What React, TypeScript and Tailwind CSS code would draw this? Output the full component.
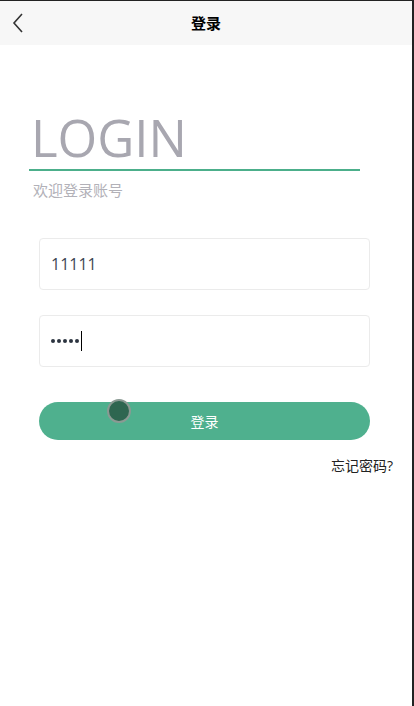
import React from "react";

export default function App() {
  return (
    <div className="relative h-[706px] w-[414px] overflow-hidden border-t border-r-2 border-[#222] bg-white font-['Open_Sans','Noto_Sans_CJK_SC',sans-serif]">
      {/* Header */}
      <div className="relative flex h-[44px] items-center justify-center bg-[#f7f7f7]">
        <button className="absolute left-[11px] top-[11px] text-[#333]">
          <svg width="14" height="22" viewBox="0 0 14 22" fill="none">
            <path d="M11 2 L3 11 L11 20" stroke="#333" strokeWidth="1.6" />
          </svg>
        </button>
        <h1 className="text-[15px] font-bold text-black">登录</h1>
      </div>

      {/* Title */}
      <div className="ml-[29px] mt-[60px] w-[331px] border-b-2 border-[#4caf8b]">
        <div className="pl-[2px] text-[51px] leading-[64px] text-[#a8a7b0]">LOGIN</div>
      </div>
      <p className="ml-[33px] mt-[9px] text-[15px] leading-[20px] text-[#b2b1b8]">欢迎登录账号</p>

      {/* Form */}
      <div className="ml-[39px] mt-[38px] flex w-[331px] flex-col">
        <div className="flex h-[52px] items-center rounded-[4px] border border-[#ebebeb] px-[11px] text-[16px] text-[#3d4553]">
          11111
        </div>
        <div className="mt-[25px] flex h-[52px] items-center gap-[2px] rounded-[4px] border border-[#ebebeb] px-[11px]">
          {[0, 1, 2, 3, 4].map((i) => (
            <span key={i} className="h-[4px] w-[4px] rounded-full bg-[#2c3440]" />
          ))}
          <span className="h-[20px] w-[1px] bg-black" />
        </div>
        <button className="relative mt-[35px] h-[38px] rounded-full bg-[#4fb08e] text-[14px] text-white">
          登录
          <span className="absolute left-[68px] top-[-3px] h-[24px] w-[24px] rounded-full border-2 border-[#8a9a93] bg-[#2e6650]" />
        </button>
      </div>
      <div className="mr-[19px] mt-[15px] text-right text-[14px] text-[#222]">忘记密码?</div>
    </div>
  );
}
